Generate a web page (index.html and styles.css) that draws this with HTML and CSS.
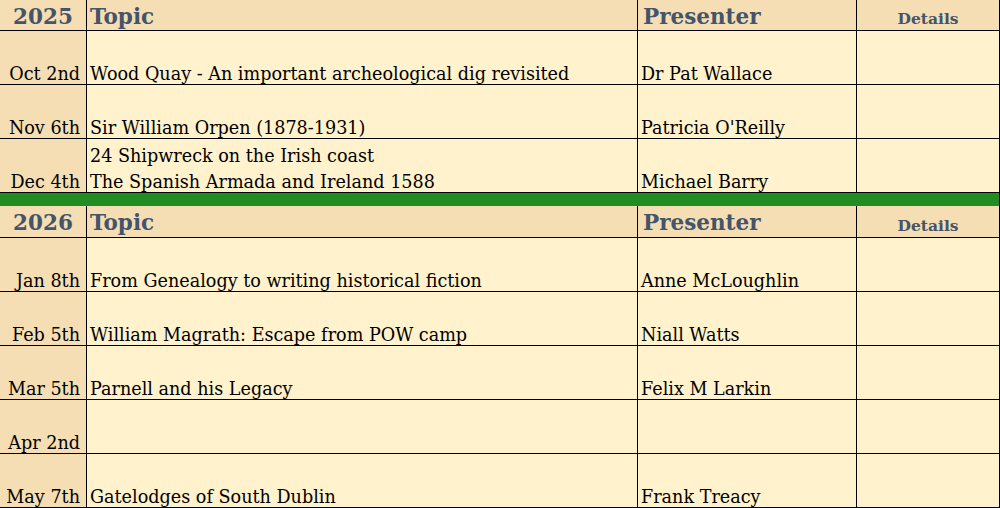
FILE: index.html
```html
<!DOCTYPE html>
<html>
<head>
<meta charset="utf-8">
<link rel="stylesheet" href="styles.css">
</head>
<body>
<div class="sheet">
  <section class="block">
    <div class="cell head year"><span>2025</span></div>
    <div class="cell head topic"><span>Topic</span></div>
    <div class="cell head pres"><span>Presenter</span></div>
    <div class="cell head det"><span>Details</span></div>

    <div class="cell date"><span>Oct 2nd</span></div>
    <div class="cell"><span>Wood Quay - An important archeological dig revisited</span></div>
    <div class="cell"><span>Dr Pat Wallace</span></div>
    <div class="cell"></div>

    <div class="cell date"><span>Nov 6th</span></div>
    <div class="cell"><span>Sir William Orpen (1878-1931)</span></div>
    <div class="cell"><span>Patricia O'Reilly</span></div>
    <div class="cell"></div>

    <div class="cell date"><span>Dec 4th</span></div>
    <div class="cell"><span>24 Shipwreck on the Irish coast<br>The Spanish Armada and Ireland 1588</span></div>
    <div class="cell"><span>Michael Barry</span></div>
    <div class="cell"></div>
  </section>
  <div class="divider"></div>
  <section class="block second">
    <div class="cell head year"><span>2026</span></div>
    <div class="cell head topic"><span>Topic</span></div>
    <div class="cell head pres"><span>Presenter</span></div>
    <div class="cell head det"><span>Details</span></div>

    <div class="cell date"><span>Jan 8th</span></div>
    <div class="cell"><span>From Genealogy to writing historical fiction</span></div>
    <div class="cell"><span>Anne McLoughlin</span></div>
    <div class="cell"></div>

    <div class="cell date"><span>Feb 5th</span></div>
    <div class="cell"><span>William Magrath: Escape from POW camp</span></div>
    <div class="cell"><span>Niall Watts</span></div>
    <div class="cell"></div>

    <div class="cell date"><span>Mar 5th</span></div>
    <div class="cell"><span>Parnell and his Legacy</span></div>
    <div class="cell"><span>Felix M Larkin</span></div>
    <div class="cell"></div>

    <div class="cell date"><span>Apr 2nd</span></div>
    <div class="cell"></div>
    <div class="cell"></div>
    <div class="cell"></div>

    <div class="cell date"><span>May 7th</span></div>
    <div class="cell"><span>Gatelodges of South Dublin</span></div>
    <div class="cell"><span>Frank Treacy</span></div>
    <div class="cell"></div>
  </section>
</div>
</body>
</html>
```

FILE: styles.css
```css
html, body {
  margin: 0;
  padding: 0;
  background: #fff2cc;
}
body {
  width: 1000px;
  height: 508px;
  overflow: hidden;
  font-family: "DejaVu Serif", "Liberation Serif", serif;
  color: #000;
}
.sheet {
  width: 1000px;
}
.block {
  display: grid;
  grid-template-columns: 86px 550px 218px 142px;
  grid-template-rows: 30px repeat(3, 53px);
  gap: 1px;
  background: #000;
  border-right: 1px solid #000;
  border-bottom: 1px solid #000;
  width: 999px;
}
.block.second {
  grid-template-rows: 31px repeat(5, 53px);
}
.cell {
  background: #fff2cc;
  display: flex;
  flex-direction: column;
  justify-content: flex-end;
  font-size: 17.6px;
  line-height: 26px;
  padding: 0 3px;
  white-space: nowrap;
  overflow: hidden;
}
.cell > span {
  margin-bottom: -3px;
}
.cell.date {
  background: #f5deb3;
  align-items: flex-end;
  padding-right: 6px;
}
.cell.head {
  background: #f5deb3;
  color: #44546a;
  font-weight: bold;
  font-size: 21.5px;
  justify-content: center;
  line-height: 30px;
}
.cell.head > span {
  margin-bottom: -3px;
}
.cell.year {
  align-items: center;
}
.cell.pres {
  padding-left: 5px;
}
.cell.det {
  font-size: 15.5px;
  align-items: center;
  justify-content: flex-end;
  line-height: 24px;
}
.cell.det > span {
  margin-bottom: -1px;
}
.divider {
  height: 13px;
  background: #228b22;
  border-right: 1px solid #000;
  width: 999px;
}
```
